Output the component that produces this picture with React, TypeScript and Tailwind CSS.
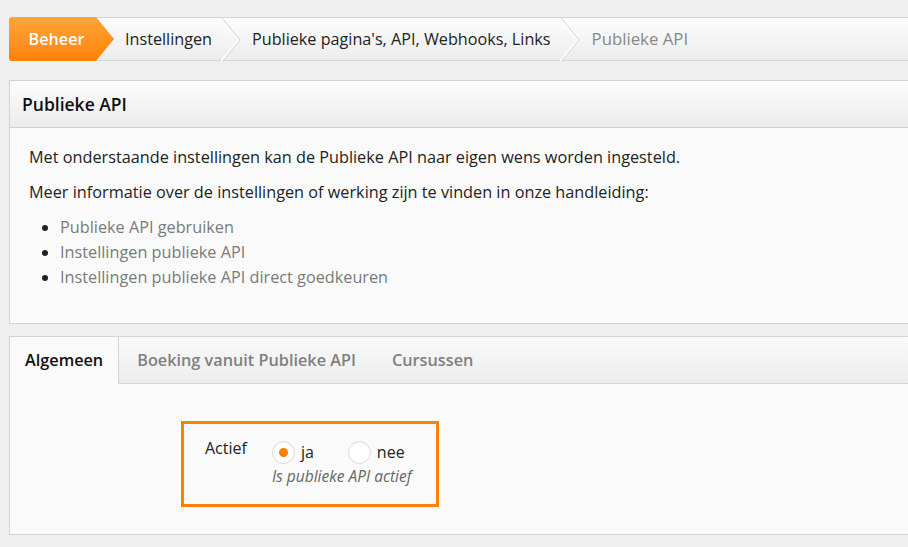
import React, { useState } from 'react';

const crumbs = ['Instellingen', "Publieke pagina's, API, Webhooks, Links"];

const manualLinks = [
  'Publieke API gebruiken',
  'Instellingen publieke API',
  'Instellingen publieke API direct goedkeuren',
];

const tabs = ['Algemeen', 'Boeking vanuit Publieke API', 'Cursussen'];

const Chevron: React.FC = () => (
  <svg width="20" height="44" viewBox="0 0 20 44" className="shrink-0">
    <polyline points="1,0 19,22 1,44" fill="none" stroke="#ffffff" strokeWidth="2" transform="translate(-1.5,0)" />
    <polyline points="1,0 19,22 1,44" fill="none" stroke="#d3d3d3" strokeWidth="1" />
  </svg>
);

const Radio: React.FC<{ checked: boolean; label: string; onSelect: () => void }> = ({ checked, label, onSelect }) => (
  <button type="button" onClick={onSelect} className="flex items-center gap-[6px]">
    <span className="flex h-[23px] w-[23px] items-center justify-center rounded-full border border-[#dcdcdc] bg-white shadow-[inset_0_1px_2px_rgba(0,0,0,0.06)]">
      {checked && <span className="h-[9px] w-[9px] rounded-full bg-[#ff7f00]" />}
    </span>
    <span className="text-[16px] text-[#222]">{label}</span>
  </button>
);

export default function App() {
  const [activeTab, setActiveTab] = useState(0);
  const [actief, setActief] = useState(true);

  return (
    <div className="min-h-[547px] w-full overflow-hidden bg-[#efefef] font-['Open_Sans',sans-serif] text-[16.25px] text-[#222]">
      <div className="pl-[9px] pt-[17px] pb-[12px]">
        {/* breadcrumb */}
        <nav className="-mr-5 flex h-[44px] items-stretch rounded-l-[3px] border border-[#d3d3d3] bg-gradient-to-b from-[#fdfdfd] to-[#ececec] text-[16.2px]">
          <div className="-my-px -ml-px flex items-stretch">
            <span className="flex w-[87px] items-center justify-center rounded-l-[3px] bg-gradient-to-b from-[#ffa53a] to-[#ff8200] pl-[8px] font-semibold text-white">
              Beheer
            </span>
            <svg width="18" height="44" viewBox="0 0 18 44" className="shrink-0">
              <defs>
                <linearGradient id="crumbArrow" x1="0" y1="0" x2="0" y2="1">
                  <stop offset="0" stopColor="#ffa53a" />
                  <stop offset="1" stopColor="#ff8200" />
                </linearGradient>
              </defs>
              <polygon points="0,0 18,22 0,44" fill="url(#crumbArrow)" />
            </svg>
          </div>
          {crumbs.map((c) => (
            <React.Fragment key={c}>
              <span className="flex items-center pl-[11px] pr-[9px] text-[#222]">{c}</span>
              <Chevron />
            </React.Fragment>
          ))}
          <span className="flex items-center pl-[12px] text-[16.8px] text-[#888]">Publieke API</span>
        </nav>

        {/* intro panel */}
        <section className="-mr-5 mt-[19px] border border-[#d3d3d3] bg-[#fafafa]">
          <header className="flex h-[47px] items-center border-b border-[#d0d0d0] bg-gradient-to-b from-[#fcfcfc] to-[#ececec] px-[12px]">
            <h2 className="text-[17.5px] font-semibold text-[#111]">Publieke API</h2>
          </header>
          <div className="px-[19px] pt-[17px] pb-[33px] leading-[25px]">
            <p>Met onderstaande instellingen kan de Publieke API naar eigen wens worden ingesteld.</p>
            <p className="mt-[10px]">Meer informatie over de instellingen of werking zijn te vinden in onze handleiding:</p>
            <ul className="mt-[10px] list-disc pl-[31px] marker:text-[#222]">
              {manualLinks.map((l) => (
                <li key={l}>
                  <a href="#" className="text-[#7a7a7a]">{l}</a>
                </li>
              ))}
            </ul>
          </div>
        </section>

        {/* settings panel */}
        <section className="-mr-5 mt-[12px] border border-[#d3d3d3] bg-[#fafafa]">
          <div className="flex h-[47px] bg-gradient-to-b from-[#fafafa] to-[#ececec]">
            {tabs.map((t, i) => (
              <button
                key={t}
                type="button"
                onClick={() => setActiveTab(i)}
                className={
                  i === activeTab
                    ? 'flex items-center border-r border-[#d3d3d3] bg-[#fafafa] px-[15px] font-semibold text-[#111]'
                    : 'flex items-center border-b border-[#d3d3d3] px-[18px] font-semibold text-[#808080]'
                }
              >
                {t}
              </button>
            ))}
            <div className="flex-1 border-b border-[#d3d3d3]" />
          </div>
          <div className="flex h-[150px] pt-[37px] pl-[171px]">
            <div className="flex h-[86px] w-[258px] gap-[25px] border-[3px] border-[#ff8000] pl-[21px] pt-[13px]">
              <span className="text-[16px] leading-[22px]">Actief</span>
              <div>
                <div className="flex items-center gap-[34px] pt-[3px]">
                  <Radio checked={actief} label="ja" onSelect={() => setActief(true)} />
                  <Radio checked={!actief} label="nee" onSelect={() => setActief(false)} />
                </div>
                <p className="mt-[1px] text-[15.5px] italic text-[#666]">Is publieke API actief</p>
              </div>
            </div>
          </div>
        </section>
      </div>
    </div>
  );
}
